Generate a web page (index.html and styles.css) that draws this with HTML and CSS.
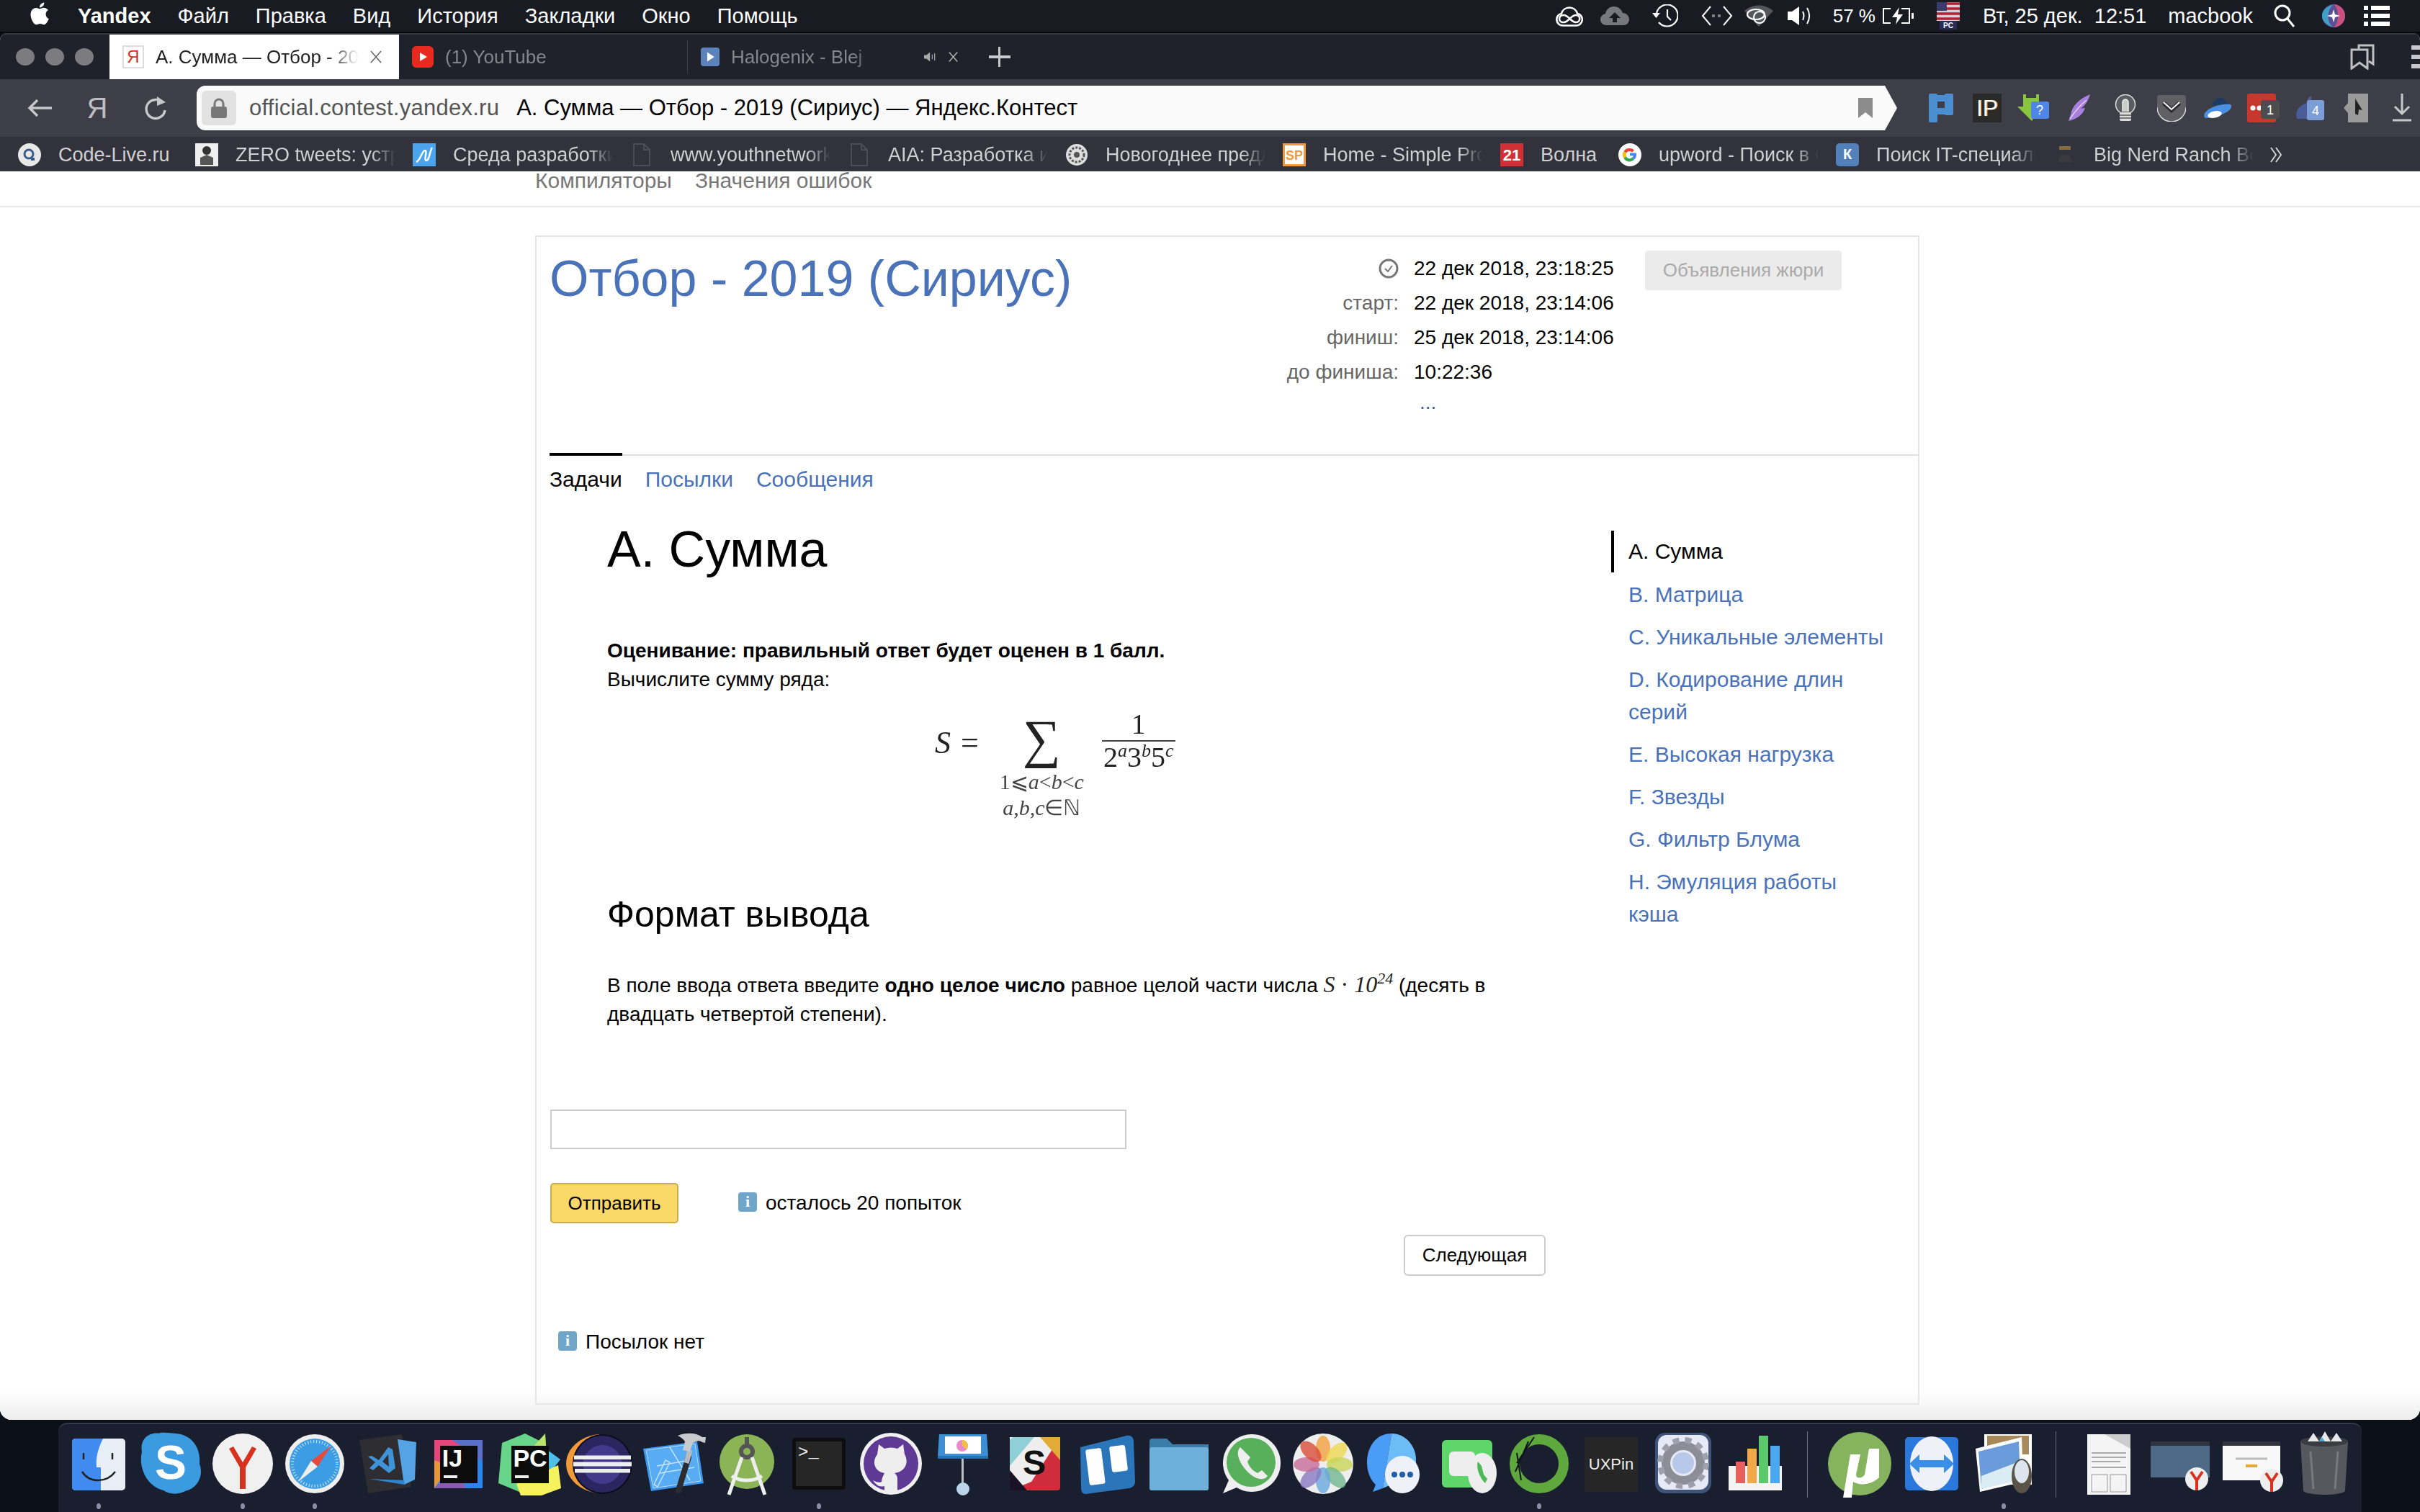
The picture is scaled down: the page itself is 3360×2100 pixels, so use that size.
FILE: index.html
```html
<!DOCTYPE html>
<html lang="ru">
<head>
<meta charset="UTF-8">
<title>А. Сумма — Отбор - 2019 (Сириус) — Яндекс.Контест</title>
<link rel="stylesheet" href="styles.css">
</head>
<body>
<div class="screen">

<!-- Системное меню -->
<div class="menubar">
  <svg class="apple" viewBox="0 0 24 24" width="36" height="36"><path fill="#fff" d="M17.05 12.54c-.03-2.6 2.13-3.85 2.22-3.91-1.21-1.77-3.1-2.01-3.77-2.04-1.6-.16-3.13.94-3.95.94-.81 0-2.07-.92-3.4-.89-1.75.03-3.37 1.02-4.27 2.58-1.82 3.16-.47 7.84 1.31 10.4.87 1.26 1.9 2.67 3.26 2.62 1.31-.05 1.8-.85 3.38-.85 1.58 0 2.02.85 3.4.82 1.4-.02 2.3-1.28 3.16-2.54.99-1.46 1.4-2.87 1.43-2.95-.03-.01-2.74-1.05-2.77-4.18zM14.45 4.89c.72-.87 1.21-2.09 1.07-3.3-1.04.04-2.3.69-3.05 1.56-.67.77-1.25 2.01-1.1 3.2 1.16.09 2.35-.59 3.08-1.46z"/></svg>
  <span class="app-name">Yandex</span>
  <span>Файл</span><span>Правка</span><span>Вид</span><span>История</span><span>Закладки</span><span>Окно</span><span>Помощь</span>
  <div class="status">
    <svg width="38" height="30" viewBox="0 0 38 30" fill="none" stroke="#fff" stroke-width="2.6"><path d="M10 28.500a8.500 8.500 0 0 1-2-16.800 11.500 11.500 0 0 1 22 0 8.500 8.500 0 0 1-1 16.800z"/><path d="M9 24c-6-2-5-10 2-10 7 0 10 10 17 10 7 0 7-10 0-10-7 0-10 10-17 10z"/></svg>
    <svg class="ml-24" width="40" height="28" viewBox="0 0 40 28"><path fill="#77787e" d="M8 27C3 27 0 23 0 19c0-4 3-7 7-8 1-6 6-10 12-10 6 0 10 4 12 9 5 0 9 4 9 9s-4 8-8 8z"/><path fill="#191b23" d="M20 9l8 8h-5v6h-6v-6h-5z"/></svg>
    <svg class="ml-32" width="36" height="32" viewBox="0 0 36 32" fill="none" stroke="#fff" stroke-width="2.200"><path d="M6 12A15 15 0 1 1 9 25"/><path d="M21 7v10l5 5"/><path fill="#fff" stroke="none" d="M0 12h11l-5.500 7z"/></svg>
    <svg class="ml-32" width="44" height="30" viewBox="0 0 44 30" fill="none" stroke="#fff" stroke-width="2"><path d="M13 2L2 15l11 13M31 2l11 13-11 13"/><path stroke="#7b7c82" stroke-width="4" stroke-dasharray="4 4" d="M15 15h14"/></svg>
    <svg class="ml-16" width="40" height="30" viewBox="0 0 40 30"><path fill="#55565c" d="M0 8C12-2 28-2 40 8L20 30z"/><ellipse cx="16" cy="13" rx="12" ry="7" fill="none" stroke="#fff" stroke-width="2.200"/><circle cx="21" cy="17" r="8" fill="none" stroke="#fff" stroke-width="2.200"/></svg>
    <svg class="ml-20" width="34" height="28" viewBox="0 0 34 28"><path fill="#fff" d="M0 8h6l10-7v26L6 20H0z"/><path d="M21 8c2 4 2 8 0 12M27 3c4 7 4 15 0 22" fill="none" stroke="#fff" stroke-width="2"/></svg>
    <span class="ml-29 pct">57 %</span>
    <svg class="ml-9" width="47" height="24" viewBox="0 0 47 24" fill="none" stroke="#fff" stroke-width="2"><path d="M12 2H2v20h10M27 2h11v20H27"/><path fill="#fff" stroke="none" d="M24 0L14 14h7l-2 10 10-14h-7zM41 8h3v8h-3z"/></svg>
    <svg class="ml-29" width="32" height="38" viewBox="0 0 32 38"><rect width="32" height="26" fill="#d0d0d8"/><path stroke="#b22234" stroke-width="3.400" d="M0 2h32M0 9h32M0 16h32M0 23h32"/><rect width="14" height="12" fill="#3c3b6e"/><rect x="4" y="26" width="24" height="12" fill="#2a2c58"/><text class="flag-text" x="16" y="36">PC</text></svg>
    <span class="ml-32">Вт, 25 дек.&nbsp; 12:51</span>
    <span class="ml-30">macbook</span>
    <svg class="ml-29" width="30" height="32" viewBox="0 0 30 32" fill="none" stroke="#fff" stroke-width="3"><circle cx="12" cy="12" r="10"/><path d="M19 20l9 11"/></svg>
    <svg class="ml-37" width="32" height="32" viewBox="0 0 32 32"><circle cx="16" cy="16" r="16" fill="#5a4f96"/><path fill="#c9507f" d="M16 0a16 16 0 0 1 0 32c8-6 8-26 0-32z"/><path fill="#3f9fc4" d="M16 32C6 26 6 8 16 0 4 4 0 10 0 16s4 12 16 16z"/><path fill="#fff" d="M16 7l2 7 7 2-7 2-2 7-2-7-7-2 7-2z"/></svg>
    <svg class="ml-26" width="36" height="30" viewBox="0 0 36 30" fill="#fff"><rect width="6" height="6" y="1"/><rect x="10" y="1" width="26" height="6"/><rect width="6" height="6" y="12"/><rect x="10" y="12" width="26" height="6"/><rect width="6" height="6" y="23"/><rect x="10" y="23" width="26" height="6"/></svg>
  </div>
</div>

<div class="browser">
  <!-- Вкладки -->
  <div class="tabstrip">
    <div class="lights"><i></i><i></i><i></i></div>
    <div class="tab tab-active">
      <span class="fav fav-ya">Я</span>
      <span class="tab-title">А. Сумма — Отбор - 2019 (Сириус)</span>
      <svg width="16" height="18" viewBox="0 0 16 18" stroke="#666" stroke-width="1.600"><path d="M1 1l14 16M15 1L1 17"/></svg>
    </div>
    <div class="tab tab-sep">
      <svg width="30" height="30" viewBox="0 0 30 30"><rect width="30" height="30" rx="6" fill="#e62b1e"/><path d="M11 9l10 6-10 6z" fill="#fff"/></svg>
      <span class="tab-title">(1) YouTube</span>
    </div>
    <div class="tab tab-sep">
      <svg width="32" height="32" viewBox="0 0 32 32"><rect width="32" height="32" rx="5" fill="#5b82bb"/><path d="M11 8l12 8-12 8z" fill="#fff"/></svg>
      <span class="tab-title tab-title-short">Halogenix - Blej</span>
      <svg class="tab-mute" width="22" height="16" viewBox="0 0 22 16" fill="#aaa"><path d="M0 5h4l6-5v16l-6-5H0z"/><path d="M14 4v8M18 2v12" stroke="#aaa" stroke-width="1.500"/></svg>
      <svg width="16" height="18" viewBox="0 0 16 18" stroke="#bbb" stroke-width="1.600"><path d="M1 1l14 16M15 1L1 17"/></svg>
    </div>
    <svg class="tab-plus" width="30" height="28" viewBox="0 0 30 28" fill="#c8c8cc"><rect y="12" width="30" height="4"/><rect x="13" width="3" height="28"/></svg>
    <div class="tabstrip-right">
      <svg width="36" height="36" viewBox="0 0 36 36" fill="none" stroke="#c0c0c4" stroke-width="3"><path d="M13 8V2h20v26l-6-4M3 8h22v26l-11-8-11 8z"/></svg>
      <svg class="tab-dots" width="22" height="36" viewBox="0 0 22 36" fill="#c8c8cc"><rect x="10" y="2" width="12" height="6"/><rect x="10" y="15" width="12" height="6"/><rect x="10" y="28" width="12" height="6"/></svg>
    </div>
  </div>

  <!-- Адресная строка -->
  <div class="toolbar">
    <div class="nav-btns">
      <svg width="34" height="26" viewBox="0 0 34 26" fill="none" stroke="#c8c8cc" stroke-width="3.400"><path d="M34 13H3M14 2L3 13l11 11"/></svg>
      <span class="ya-btn">Я</span>
      <svg width="34" height="36" viewBox="0 0 34 36" fill="none" stroke="#c8c8cc" stroke-width="3.400"><path d="M28 11a13 13 0 1 0 3 10"/><path fill="#c8c8cc" stroke="none" d="M20 2l12 8-12 5z"/></svg>
    </div>
    <div class="address">
      <div class="lock"><svg width="22" height="28" viewBox="0 0 22 28"><path d="M5 13V8a6 6 0 0 1 12 0v5" fill="none" stroke="#777" stroke-width="3"/><rect y="12" width="22" height="16" rx="3" fill="#777"/></svg></div>
      <span class="url-host">official.contest.yandex.ru</span>
      <span class="url-title">А. Сумма — Отбор - 2019 (Сириус) — Яндекс.Контест</span>
      <svg class="url-flag" width="20" height="28" viewBox="0 0 20 28"><path fill="#8c8c8c" d="M0 0h20v28l-10-8-10 8z"/></svg>
    </div>
    <div class="extensions">
      <span><svg width="34" height="40" viewBox="0 0 34 40" fill="#4a8ed0"><rect width="12" height="40" rx="2"/><rect x="22" width="12" height="30" rx="2"/><rect y="2" width="34" height="9" rx="2"/><rect y="20" width="34" height="9" rx="2"/></svg></span>
      <span><svg width="40" height="40" viewBox="0 0 40 40"><rect width="40" height="40" fill="#2a2a28"/><text class="ext-ip-o" x="21" y="31">IP</text><text class="ext-ip" x="20" y="31">IP</text></svg></span>
      <span><svg width="44" height="38" viewBox="0 0 44 38"><path fill="#8ac53e" d="M8 0h4v5h14V0h4v11h6L20 37 0 17h8z"/><rect x="19" y="10" width="25" height="24" rx="3" fill="#4f86e8"/><text class="ext-q" x="31" y="28">?</text></svg></span>
      <span><svg width="32" height="38" viewBox="0 0 32 38"><path fill="#a87fdc" d="M31 0C16 6 6 16 4 28L1 37c10-2 20-8 23-18-2 0-4 0-6 1 6-4 11-12 13-20z"/><path d="M3 34C10 24 18 14 26 8" stroke="#e4d4f8" stroke-width="1.500" fill="none"/></svg></span>
      <span><svg width="30" height="38" viewBox="0 0 30 38"><circle cx="15" cy="14" r="13.500" fill="#5c5d62" stroke="#ddd" stroke-width="1.500"/><path d="M11 24V11a4 4 0 0 1 8 0v13" fill="#ccc" stroke="#eee" stroke-width="1.500"/><rect x="7" y="25" width="16" height="12" rx="2" fill="#ddd"/><path d="M7 29h16M7 33h16" stroke="#555" stroke-width="1.500"/></svg></span>
      <span><svg width="40" height="37" viewBox="0 0 40 37"><path fill="#606064" d="M0 3a3 3 0 0 1 3-3h34a3 3 0 0 1 3 3v14a20 20 0 0 1-40 0z"/><path d="M0 17a20 20 0 0 0 40 0" fill="none" stroke="#ddd" stroke-width="1.500"/><path d="M9 11l11 10 11-10" fill="none" stroke="#2c2c30" stroke-width="6"/><path d="M9 10l11 10 11-10" fill="none" stroke="#fff" stroke-width="2"/></svg></span>
      <span><svg width="40" height="28" viewBox="0 0 40 28"><path fill="#1c3a62" d="M12 10C14 3 20 0 24 0s8 3 10 9z"/><path fill="#4a90e2" d="M2 27C-3 20 16 7 38 9c2 2 2 6-6 11-10 6-26 10-30 7z"/><ellipse cx="16" cy="23" rx="10" ry="4.500" fill="#fff" transform="rotate(-12 16 23)"/></svg></span>
      <span><svg width="46" height="40" viewBox="0 0 46 40"><rect width="40" height="40" rx="3" fill="#c6372e"/><circle cx="8" cy="20" r="3.500" fill="#fff"/><circle cx="17" cy="20" r="3.500" fill="#fff"/><rect x="19" y="9" width="26" height="26" rx="4" fill="#4d4d50"/><text class="ext-n" x="32" y="29">1</text></svg></span>
      <span><svg width="40" height="34" viewBox="0 0 40 34"><path fill="#4a5c98" d="M2 32C-2 20 8 12 16 10c0-4 2-8 6-10v32z"/><rect x="16" y="6" width="24" height="28" rx="3" fill="#7c9ed8"/><text class="ext-n" x="28" y="27">4</text></svg></span>
      <span><svg width="34" height="40" viewBox="0 0 34 40"><path fill="#9a9a9a" d="M6 0h28v40H6zM0 20l6-7v14z"/><path fill="#222" d="M16 7l10 16-5-1-1 8-4-2z"/></svg></span>
      <span><svg width="26" height="40" viewBox="0 0 26 40" fill="none" stroke="#c8c8cc" stroke-width="3"><path d="M13 0v28M3 18l10 10 10-10M0 37h26"/></svg></span>
    </div>
  </div>

  <!-- Закладки -->
  <div class="bookmarks">
    <div class="bm bm-first"><svg width="32" height="32" viewBox="0 0 32 32"><circle cx="16" cy="16" r="16" fill="#e8e8e8"/><circle cx="15" cy="15" r="6" fill="none" stroke="#3a5a8c" stroke-width="3"/><rect x="18" y="20" width="5" height="4" fill="#3a5a8c"/></svg><span>Code-Live.ru</span></div>
    <div class="bm"><svg width="32" height="32" viewBox="0 0 32 32"><rect width="32" height="32" fill="#eee"/><circle cx="16" cy="10" r="6" fill="#333"/><path d="M7 30V20l9-4 9 4v10z" fill="#555"/></svg><span>ZERO tweets: устройство</span></div>
    <div class="bm"><svg width="32" height="32" viewBox="0 0 32 32"><rect width="32" height="32" fill="#4aa4ee"/><path d="M5 26c6-2 8-16 12-16s-2 14 2 14 5-14 8-18" fill="none" stroke="#fff" stroke-width="2.500"/></svg><span>Среда разработки</span></div>
    <div class="bm"><svg width="32" height="32" viewBox="0 0 24 32" fill="none" stroke="#4c4d55" stroke-width="2"><path d="M1 1h14l8 8v22H1zM15 1v8h8"/></svg><span>www.youthnetwork.org</span></div>
    <div class="bm"><svg width="32" height="32" viewBox="0 0 24 32" fill="none" stroke="#4c4d55" stroke-width="2"><path d="M1 1h14l8 8v22H1zM15 1v8h8"/></svg><span>AIA: Разработка игр</span></div>
    <div class="bm"><svg width="32" height="32" viewBox="0 0 32 32"><circle cx="16" cy="16" r="15" fill="#ddd"/><circle cx="16" cy="16" r="10" fill="none" stroke="#555" stroke-width="3" stroke-dasharray="3 2"/><circle cx="16" cy="16" r="4" fill="#555"/></svg><span>Новогоднее предложение</span></div>
    <div class="bm"><svg width="32" height="32" viewBox="0 0 32 32"><rect width="32" height="32" fill="#f09a3e"/><rect x="3" y="3" width="26" height="26" fill="#fff"/><text class="bm-sp" x="16" y="23">SP</text></svg><span>Home - Simple Programmer</span></div>
    <div class="bm bm-short"><svg width="32" height="32" viewBox="0 0 32 32"><rect width="32" height="32" fill="#cf2f35"/><text class="bm-21" x="16" y="24">21</text></svg><span>Волна</span></div>
    <div class="bm"><svg width="32" height="32" viewBox="0 0 32 32"><circle cx="16" cy="16" r="16" fill="#fff"/><path d="M16 7a9 9 0 0 1 6 2.400l-3 3a5 5 0 0 0-8 1.200L7.500 11A9 9 0 0 1 16 7z" fill="#ea4335"/><path d="M7.500 11l3.500 2.800a5 5 0 0 0 0 4.400L7.500 21a9 9 0 0 1 0-10z" fill="#fbbc05"/><path d="M7.500 21l3.500-2.800a5 5 0 0 0 8 1.600l3 2.600A9 9 0 0 1 7.500 21z" fill="#34a853"/><path d="M25 16c0 3-1 5-3 6.400l-3-2.600c1-.7 1.500-1.500 1.800-2.600H16v-3.700h8.800c.1.800.2 1.600.2 2.500z" fill="#4285f4"/></svg><span>upword - Поиск в Google</span></div>
    <div class="bm"><svg width="32" height="32" viewBox="0 0 32 32"><rect width="32" height="32" rx="5" fill="#5181b8"/><text class="bm-vk" x="16" y="22">К</text></svg><span>Поиск IT-специалистов</span></div>
    <div class="bm"><svg width="32" height="32" viewBox="0 0 32 32"><rect x="8" y="4" width="16" height="5" fill="#8a6c3a"/><path d="M6 26l4-10h12l4 10z" fill="#3a3a40"/></svg><span>Big Nerd Ranch Books</span></div>
    <svg class="bm-more" width="18" height="22" viewBox="0 0 18 22" fill="none" stroke="#d0d0d4" stroke-width="2"><path d="M2 1l7 10-7 10M9 1l7 10-7 10"/></svg>
  </div>

  <!-- Страница -->
  <div class="page">
    <div class="subnav"><a>Компиляторы</a><a>Значения ошибок</a></div>
    <div class="card">
      <div class="head">
        <h1 class="contest-title">Отбор - 2019 (Сириус)</h1>
        <div class="times">
          <span class="t-label"><svg width="28" height="28" viewBox="0 0 28 28" fill="none" stroke="#777" stroke-width="3"><circle cx="14" cy="14" r="12"/><path stroke-width="2" d="M9 14l4 4 6-8"/></svg></span><span>22 дек 2018, 23:18:25</span>
          <span class="t-label">старт:</span><span>22 дек 2018, 23:14:06</span>
          <span class="t-label">финиш:</span><span>25 дек 2018, 23:14:06</span>
          <span class="t-label">до финиша:</span><span>10:22:36</span>
          <span></span><span class="t-more">...</span>
        </div>
        <button class="jury-btn">Объявления жюри</button>
      </div>
      <div class="tabs">
        <a class="tabs-item tabs-item-active">Задачи</a>
        <a class="tabs-item">Посылки</a>
        <a class="tabs-item">Сообщения</a>
      </div>
      <div class="problem-wrap">
        <div class="problem">
          <div class="statement">
            <h1 class="problem-title">A. Сумма</h1>
            <p class="legend"><b>Оценивание: правильный ответ будет оценен в 1 балл.</b><br>Вычислите сумму ряда:</p>
            <div class="formula">
              <span class="f-s">S</span><span class="f-eq">=</span>
              <div class="f-sum">
                <span class="f-sigma">∑</span>
                <span class="f-sub">1⩽<i>a</i>&lt;<i>b</i>&lt;<i>c</i></span>
                <span class="f-sub"><i>a</i>,<i>b</i>,<i>c</i>∈ℕ</span>
              </div>
              <div class="f-frac">
                <span class="f-num">1</span>
                <span class="f-den">2<sup><i>a</i></sup>3<sup><i>b</i></sup>5<sup><i>c</i></sup></span>
              </div>
            </div>
            <h2 class="output-title">Формат вывода</h2>
            <p class="output-text">В поле ввода ответа введите <b>одно целое число</b> равное целой части числа <span class="math"><i>S</i> · <i>10<sup>24</sup></i></span> (десять в двадцать четвертой степени).</p>
          </div>
          <input class="answer" type="text">
          <div class="submit-row">
            <button class="send-btn">Отправить</button>
            <span class="info-icon">i</span><span class="attempts">осталось 20 попыток</span>
          </div>
          <div class="next-row"><button class="next-btn">Следующая</button></div>
          <div class="no-subs"><span class="info-icon">i</span><span>Посылок нет</span></div>
        </div>
        <div class="side">
          <a class="side-item side-item-active">A. Сумма</a>
          <a class="side-item">B. Матрица</a>
          <a class="side-item">C. Уникальные элементы</a>
          <a class="side-item">D. Кодирование длин серий</a>
          <a class="side-item">E. Высокая нагрузка</a>
          <a class="side-item">F. Звезды</a>
          <a class="side-item">G. Фильтр Блума</a>
          <a class="side-item">H. Эмуляция работы кэша</a>
        </div>
      </div>
    </div>
  </div>
</div>

<!-- Dock -->
<div class="dock">
  <div class="di dot"><svg viewBox="0 0 90 90"><rect x="8" y="10" width="74" height="72" rx="5" fill="#e8eef6"/><path d="M13 10h38c-8 16-10 28-9 40h6v32H13a5 5 0 0 1-5-5V15a5 5 0 0 1 5-5z" fill="#3f8bf0"/><path d="M24 30v9M64 30v9" stroke="#222" stroke-width="2.500"/><path d="M22 56c10 16 34 16 46 0" fill="none" stroke="#222" stroke-width="2.500"/></svg></div>
  <div class="di"><svg viewBox="0 0 90 90"><path d="M30 3C14 0 2 12 5 28c-5 22 6 48 30 54 8 6 22 6 30 1 18-4 26-22 20-38 2-24-12-40-32-42C24 0 30 3 30 3z" fill="#3c9ae0"/><text class="d-skype" x="45" y="66">S</text></svg></div>
  <div class="di dot"><svg viewBox="0 0 90 90"><circle cx="45" cy="45" r="42" fill="#f0f0f0"/><path d="M26 24l6-3 13 22 13-22 6 3-15 26v30h-8V50z" fill="#d8321f"/></svg></div>
  <div class="di dot"><svg viewBox="0 0 90 90"><circle cx="45" cy="45" r="41" fill="#eee"/><circle cx="45" cy="45" r="35" fill="#3c9ce4"/><circle cx="45" cy="45" r="31" fill="none" stroke="#d8ecf8" stroke-width="4" stroke-dasharray="1 3"/><path d="M68 20L40 41l9 8z" fill="#e64a3c"/><path d="M22 70l18-29 9 8z" fill="#eee"/></svg></div>
  <!-- VS Code -->
  <div class="di"><svg viewBox="0 0 90 90"><path d="M7 12L66 4l13 73-60 9z" fill="#2e2e32"/><path d="M60 11l26 4-2 52-15 7z" fill="#55a2e4"/><path d="M20 66l49 8 15-7-15 7z" fill="#1f73bd"/><path d="M20 66l49 2 1 6z" fill="#2f86cf"/><path d="M47 22l6 3 4 26-9 7-14-11-8 7-5-3 8-8-10-8 5-1 10 6z" fill="#3f93d8"/><path d="M47 32l-8 10 9 7z" fill="#2e2e32"/></svg></div>
  <!-- IntelliJ -->
  <div class="di"><svg viewBox="0 0 90 90"><rect x="11" y="12" width="67" height="67" fill="#2c85e8"/><path d="M11 12h47L11 50z" fill="#e8457c"/><path d="M36 12h42v30z" fill="#5a6fc8"/><path d="M11 40l22 8L11 79z" fill="#e8963a"/><path d="M11 79l30-30 14 30z" fill="#8a5cb0"/><rect x="19" y="20" width="52" height="52" fill="#0c0c0c"/><text class="d-ij" x="36" y="49">IJ</text><rect x="24" y="61" width="19" height="4" fill="#eee"/></svg></div>
  <!-- PyCharm -->
  <div class="di"><svg viewBox="0 0 90 90"><path d="M5 16L37 3l28 14-24 72L0 72z" fill="#68d48a"/><path d="M65 3l3 44-34-10z" fill="#b8e46a"/><path d="M60 20l26 19-14 18z" fill="#4cc0e8"/><path d="M25 73l58-26 4 32-27 10-29 0z" fill="#f6f25e"/><rect x="18" y="20" width="52" height="52" fill="#0c0c0c"/><text class="d-ij" x="44" y="49">PC</text><rect x="23" y="61" width="19" height="4" fill="#eee"/></svg></div>
  <!-- Eclipse -->
  <div class="di"><svg viewBox="0 0 90 90"><path d="M40 4C14 6-6 24-6 45s20 39 46 41z" fill="#f09a38"/><circle cx="44.500" cy="45.500" r="41.500" fill="#0c0c1e"/><circle cx="44.500" cy="45.500" r="39.500" fill="#2b2560"/><circle cx="44.500" cy="46" r="27" fill="#443a8c"/><rect x="5" y="33.500" width="79" height="5.500" fill="#eee"/><rect x="4" y="42.500" width="81" height="6" fill="#eee"/><rect x="6" y="52" width="77" height="5.500" fill="#eee"/></svg></div>
  <!-- Xcode -->
  <div class="di"><svg viewBox="0 0 90 90"><path d="M1 24l75-10 9 58-73 11z" fill="#3d98f0"/><path d="M5 26l68-9 8 52-66 10z" fill="#58acf4" stroke="#b8dcfa" stroke-width="1"/><path d="M16 74l16-34 6 3-17 34zM24 58l48-8M20 48l46-8M38 22l28 46" fill="none" stroke="#c4e2fb" stroke-width="1.500"/><path d="M50 82l14-46" stroke="#2c2c30" stroke-width="8" stroke-linecap="round"/><path d="M61 44l5-18" stroke="#b8bac0" stroke-width="7"/><path d="M49 6c12-5 26-4 34 2l5 0-1 8-4-1c-4-3-8-2-13 1l-4 12-10-2 3-12c-3-4-6-6-10-8z" fill="#c8cace"/></svg></div>
  <div class="di"><svg viewBox="0 0 90 90"><circle cx="45" cy="42" r="38" fill="#8ab456"/><circle cx="45" cy="28" r="8" fill="none" stroke="#555" stroke-width="6"/><rect x="42" y="8" width="6" height="10" fill="#555"/><path d="M38 36L20 88M52 36l18 52" stroke="#eee" stroke-width="5"/><path d="M24 62c12 8 30 8 42 0" fill="none" stroke="#eee" stroke-width="5"/></svg></div>
  <div class="di dot"><svg viewBox="0 0 90 90"><rect x="8" y="9" width="74" height="72" rx="4" fill="#0e0e0e"/><rect x="13" y="14" width="64" height="62" fill="#262626"/><text class="d-term" x="16" y="36">&gt;_</text></svg></div>
  <div class="di"><svg viewBox="0 0 90 90"><circle cx="45" cy="45" r="43" fill="#f0f0f0"/><circle cx="45" cy="45" r="38" fill="#5f3a94"/><path d="M28 18l8 6c6-2 12-2 18 0l8-6 2 14c6 10 2 24-14 26 3 2 4 5 4 8v20a38 38 0 0 1-18 0V76c-8 2-12-2-16-8 4 2 8 4 12 2 0-4 2-8 4-12C22 56 18 42 26 32z" fill="#eee"/></svg></div>
  <div class="di"><svg viewBox="0 0 90 90"><path d="M12 4h66l2 30H10z" fill="#3c8fd4"/><rect x="10" y="34" width="70" height="4" fill="#2a70b0"/><rect x="20" y="7" width="50" height="24" fill="#fff"/><circle cx="44" cy="20" r="8" fill="#e88acc"/><path d="M44 20v-8a8 8 0 0 1 6 13z" fill="#f0c040"/><rect x="43" y="38" width="3" height="40" fill="#b8c0c8"/><circle cx="45" cy="80" r="9" fill="#bcd4e8"/></svg></div>
  <div class="di"><svg viewBox="0 0 90 90"><rect x="10" y="8" width="70" height="74" rx="4" fill="#cf2c3c"/><path d="M10 8h70L40 70 10 82z" fill="#eee"/><path d="M14 8h30L10 48V12z" fill="#8fd0d8"/><path d="M52 8h28v32z" fill="#e4aa38"/><path d="M10 54l24 28H10z" fill="#1a1226"/><text class="d-slack" x="44" y="60">S</text></svg></div>
  <div class="di"><svg viewBox="0 0 90 90"><path d="M8 22L72 6c6-1 10 2 10 8l2 56c0 4-3 8-8 9l-60 8c-4 0-7-2-7-8z" fill="#2b76ba"/><rect x="18" y="24" width="22" height="50" rx="3" fill="#fff" transform="rotate(-7 29 50)"/><rect x="50" y="20" width="22" height="36" rx="3" fill="#fff" transform="rotate(-7 60 38)"/></svg></div>
  <div class="di"><svg viewBox="0 0 90 90"><path d="M4 20V14a4 4 0 0 1 4-4h20l8 8h50v62H4z" fill="#3a7ea8"/><rect x="4" y="22" width="82" height="60" rx="3" fill="#6db0da"/></svg></div>
  <div class="di"><svg viewBox="0 0 90 90"><path d="M45 4a40 40 0 1 1-20 74L6 86l8-18A40 40 0 0 1 45 4z" fill="#eee"/><circle cx="45" cy="43" r="34" fill="#58b05c"/><path d="M30 22c-8 8 0 24 10 34s22 14 28 6l-8-8-6 4c-8-4-12-10-14-16l4-6z" fill="#eee"/></svg></div>
  <div class="di"><svg viewBox="0 0 90 90"><circle cx="45" cy="45" r="42" fill="#eee"/><g fill-opacity=".8"><ellipse cx="45" cy="24" rx="10" ry="18" fill="#f2a040"/><ellipse cx="64" cy="30" rx="10" ry="18" fill="#eed850" transform="rotate(45 64 30)"/><ellipse cx="68" cy="46" rx="18" ry="10" fill="#c8d458"/><ellipse cx="62" cy="64" rx="10" ry="18" fill="#70b890" transform="rotate(-45 62 64)"/><ellipse cx="45" cy="68" rx="10" ry="18" fill="#68a8dc"/><ellipse cx="28" cy="64" rx="10" ry="18" fill="#8a78c0" transform="rotate(45 28 64)"/><ellipse cx="22" cy="46" rx="18" ry="10" fill="#c86c98"/><ellipse cx="28" cy="28" rx="10" ry="18" fill="#d84c38" transform="rotate(-45 28 28)"/></g></svg></div>
  <div class="di"><svg viewBox="0 0 90 90"><path d="M40 3C18 3 6 22 6 44c0 12 5 24 12 30l-4 10 14-5z" fill="#4a9cf4"/><path d="M40 3c20 0 34 18 34 36v20L28 79z" fill="#6cbcf8"/><ellipse cx="55" cy="60" rx="24" ry="26" fill="#eef2f8"/><circle cx="44" cy="60" r="4" fill="#1f5ea8"/><circle cx="55" cy="60" r="4" fill="#1f5ea8"/><circle cx="66" cy="60" r="4" fill="#1f5ea8"/></svg></div>
  <div class="di"><svg viewBox="0 0 90 90"><rect x="10" y="12" width="70" height="66" rx="6" fill="#5ed66a"/><rect x="20" y="28" width="36" height="34" rx="6" fill="#eee"/><ellipse cx="66" cy="58" rx="20" ry="28" fill="#eee"/><path d="M60 42c-3 8 2 22 10 30l3-6-5-6-3-12z" fill="#4cb858"/></svg></div>
  <div class="di dot"><svg viewBox="0 0 90 90"><circle cx="45" cy="45" r="34" fill="none" stroke="#5ea83e" stroke-width="14"/><path d="M14 44L38 8M12 56L30 14M20 68L14 30" stroke="#10141f" stroke-width="2"/></svg></div>
  <div class="di"><svg viewBox="0 0 90 90"><rect x="8" y="8" width="74" height="76" fill="#262626"/><text class="d-ux" x="45" y="53">UXPin</text></svg></div>
  <div class="di"><svg viewBox="0 0 90 90"><rect x="6" y="2" width="78" height="84" rx="14" fill="#3f5478"/><rect x="10" y="5" width="70" height="76" rx="12" fill="#e6eaf6"/><circle cx="45" cy="44" r="24" fill="none" stroke="#8d8d98" stroke-width="12"/><circle cx="45" cy="44" r="32" fill="none" stroke="#a0a0ac" stroke-width="8" stroke-dasharray="9 8"/><circle cx="45" cy="44" r="15" fill="#b8c8e8"/></svg></div>
  <div class="di"><svg viewBox="0 0 90 90"><rect x="8" y="48" width="74" height="34" fill="#f4f4f4"/><rect x="18" y="42" width="13" height="30" fill="#e8605c"/><rect x="34" y="24" width="13" height="48" fill="#f0a848"/><rect x="50" y="6" width="13" height="66" fill="#5cc86c"/><rect x="66" y="20" width="13" height="52" fill="#4aa8f0"/></svg></div>
  <div class="dock-sep"></div>
  <div class="di"><svg viewBox="0 0 90 90"><circle cx="45" cy="45" r="44" fill="#86b45e"/><path d="M22 92l10-60h14l-6 28c0 6 8 6 12 0l6-36h14v40c-10 10-26 12-36 6l-2 22z" fill="#fff"/></svg></div>
  <div class="di"><svg viewBox="0 0 90 90"><rect x="8" y="8" width="74" height="74" rx="5" fill="#2b78dc"/><ellipse cx="45" cy="45" rx="30" ry="38" fill="#eef2f8"/><path d="M14 45l14-13v8h34v-8l14 13-14 13v-8H28v8z" fill="#3a8ee4"/></svg></div>
  <div class="di dot"><svg viewBox="0 0 90 90"><rect x="18" y="4" width="66" height="70" fill="#fff"/><rect x="22" y="6" width="58" height="26" fill="#a8895a"/><path d="M6 24L70 8l2 62L12 84z" fill="#fff"/><path d="M10 28l56-14 2 52-54 14z" fill="#6a9cdc"/><path d="M14 62l52-20 2 26-54 12z" fill="#dcecf4"/><ellipse cx="70" cy="62" rx="14" ry="24" fill="#5a5448"/><ellipse cx="70" cy="56" rx="10" ry="16" fill="#dde4ee"/></svg></div>
  <div class="dock-sep"></div>
  <div class="di"><svg viewBox="0 0 90 90"><rect x="16" y="4" width="60" height="84" fill="#f4f4f4"/><path d="M22 30h48M22 36h48M22 42h40M22 50h48" stroke="#aaa" stroke-width="2"/><rect x="22" y="60" width="22" height="24" fill="none" stroke="#999"/><rect x="48" y="60" width="22" height="24" fill="none" stroke="#999"/><path d="M40 4h36v20z" fill="#ccc"/></svg></div>
  <div class="di"><svg viewBox="0 0 90 90"><rect x="4" y="14" width="82" height="6" fill="#30343c"/><rect x="4" y="20" width="82" height="44" fill="#4e6a86"/><circle cx="68" cy="66" r="16" fill="#eee"/><path d="M60 56l8 12 8-12M68 68v14" fill="none" stroke="#d8321f" stroke-width="4"/></svg></div>
  <div class="di"><svg viewBox="0 0 90 90"><rect x="4" y="14" width="80" height="6" fill="#30343c"/><rect x="4" y="20" width="80" height="48" fill="#f8f8f8"/><rect x="36" y="46" width="16" height="4" fill="#e4a838"/><path d="M22 38h44" stroke="#bbb" stroke-width="3"/><circle cx="72" cy="68" r="16" fill="#eee"/><path d="M64 58l8 12 8-12M72 70v14" fill="none" stroke="#d8321f" stroke-width="4"/></svg></div>
  <div class="di"><svg viewBox="0 0 90 90"><path d="M12 14h66l-4 68c0 4-16 6-28 6s-30-2-30-6z" fill="#55585f"/><path d="M26 28l4 52M64 28l-4 52" stroke="#77797f" stroke-width="3"/><ellipse cx="45" cy="14" rx="33" ry="7" fill="#3a3c42"/><path d="M22 14l8-12 8 12 8-14 8 14 8-12 8 12z" fill="#e8e8ea"/><path d="M38 14l4-6 4 6z" fill="#4aa8d8"/></svg></div>
</div>

</div>
</body>
</html>
```

FILE: styles.css
```css
* {
    box-sizing: border-box;
}

html, body {
    margin: 0;
    padding: 0;
}

body {
    font-family: "Liberation Sans", Arial, sans-serif;
    background: #0b0f18;
}

.screen {
    width: 3360px;
    height: 2100px;
    overflow: hidden;
    display: flex;
    flex-direction: column;
}

/* Системное меню */
.menubar {
    height: 46px;
    flex: none;
    display: flex;
    align-items: center;
    gap: 37px;
    padding-left: 38px;
    background: #191b23;
    border-bottom: 2px solid #07080c;
    color: #fff;
    font-size: 29px;
}

.apple {
    margin-right: -3px;
    margin-bottom: 6px;
}

.app-name {
    font-weight: bold;
}

.status {
    margin-left: auto;
    padding-right: 42px;
    display: flex;
    align-items: center;
}

.pct {
    font-size: 26px;
}

.ml-9 { margin-left: 9px; }
.ml-16 { margin-left: 16px; }
.ml-20 { margin-left: 20px; }
.ml-24 { margin-left: 24px; }
.ml-26 { margin-left: 26px; }
.ml-29 { margin-left: 29px; }
.ml-30 { margin-left: 30px; }
.ml-32 { margin-left: 32px; }
.ml-37 { margin-left: 37px; }

.flag-text {
    fill: #fff;
    font-size: 10px;
    font-weight: bold;
    text-anchor: middle;
}

/* Браузер */
.browser {
    flex: 1;
    min-height: 0;
    display: flex;
    flex-direction: column;
    border-radius: 10px 10px 16px 16px;
    overflow: hidden;
    background: #fff;
}

.tabstrip {
    height: 64px;
    flex: none;
    display: flex;
    align-items: center;
    background: #20222b;
    border-top: 2px solid #353741;
}

.lights {
    width: 152px;
    display: flex;
    gap: 15px;
    padding-left: 22px;
}

.lights i {
    width: 26px;
    height: 24px;
    border-radius: 50%;
    background: #7b7b80;
}

.tab {
    width: 400px;
    height: 62px;
    display: flex;
    align-items: center;
    padding-left: 18px;
    gap: 16px;
    font-size: 26px;
    color: #85868c;
}

.tab-active {
    width: 402px;
    background: #fff;
    color: #222;
}

.tab-sep + .tab-sep {
    border-left: 1px solid #3d3f48;
    height: 46px;
}

.tab-title {
    flex: 1;
    min-width: 0;
    white-space: nowrap;
    overflow: hidden;
    -webkit-mask-image: linear-gradient(to right, #000 85%, transparent);
    mask-image: linear-gradient(to right, #000 85%, transparent);
}

.tab-active svg {
    margin-right: 24px;
}

.tab-title-short {
    flex: none;
    width: 200px;
}

.tab-mute {
    margin-left: 52px;
}

.tab-sep svg:last-child {
    margin-right: 24px;
}

.fav {
    flex: none;
    width: 30px;
    height: 32px;
    display: flex;
    align-items: center;
    justify-content: center;
    border: 2px solid #ddd;
    background: #fff;
    color: #d8321f;
    font-size: 24px;
}

.tab-plus {
    margin-left: 19px;
}

.tabstrip-right {
    margin-left: auto;
    display: flex;
    align-items: center;
    gap: 40px;
}

.toolbar {
    height: 80px;
    flex: none;
    display: flex;
    align-items: center;
    background: #3d3e47;
}

.nav-btns {
    width: 273px;
    flex: none;
    display: flex;
    align-items: center;
    gap: 46px;
    padding-left: 38px;
}

.ya-btn {
    width: 34px;
    color: #bdbdc2;
    font-size: 40px;
    text-align: center;
}

.address {
    width: 2361px;
    height: 62px;
    flex: none;
    display: flex;
    align-items: center;
    background: #fafafa;
    border-radius: 12px 0 0 12px;
    clip-path: polygon(0 0, 2344px 0, 100% 50%, 2344px 100%, 0 100%);
    padding-left: 7px;
    font-size: 31px;
    white-space: nowrap;
}

.lock {
    width: 48px;
    height: 48px;
    flex: none;
    display: flex;
    align-items: center;
    justify-content: center;
    background: #e2e2e2;
    border-radius: 6px;
}

.url-host {
    margin-left: 18px;
    color: #555;
    letter-spacing: 0.25px;
}

.url-title {
    margin-left: 24px;
    color: #000;
}

.url-flag {
    margin-left: auto;
    margin-right: 34px;
}

.extensions {
    display: flex;
    align-items: center;
    margin-left: 29px;
}

.extensions span {
    width: 64px;
    display: flex;
    justify-content: center;
}

.ext-ip, .ext-ip-o {
    fill: #fff;
    font-size: 32px;
    text-anchor: middle;
}

.ext-ip-o {
    fill: #e09030;
}

.ext-q, .ext-n {
    fill: #fff;
    font-size: 18px;
    text-anchor: middle;
}

.bookmarks {
    height: 48px;
    flex: none;
    display: flex;
    align-items: center;
    padding-left: 25px;
    padding-top: 2px;
    background: #31323b;
    font-size: 27px;
    color: #d0d0d4;
}

.bm {
    width: 302px;
    flex: none;
    display: flex;
    align-items: center;
    gap: 24px;
}

.bm svg {
    flex: none;
}

.bm span {
    width: 222px;
    white-space: nowrap;
    overflow: hidden;
    -webkit-mask-image: linear-gradient(to right, #000 85%, transparent);
    mask-image: linear-gradient(to right, #000 85%, transparent);
}

.bm-first {
    width: 246px;
}

.bm-first span, .bm-short span {
    width: auto;
    -webkit-mask-image: none;
    mask-image: none;
}

.bm-short {
    width: 164px;
}

.bm-sp {
    fill: #f09a3e;
    font-size: 18px;
    font-weight: bold;
    text-anchor: middle;
}

.bm-21 {
    fill: #fff;
    font-size: 22px;
    font-weight: bold;
    text-anchor: middle;
}

.bm-vk {
    fill: #fff;
    font-size: 20px;
    font-weight: bold;
    text-anchor: middle;
}

.bm-more {
    margin-left: -2px;
}

/* Страница */
.page {
    flex: 1;
    min-height: 0;
    position: relative;
    overflow: hidden;
    padding-left: 743px;
    background: #fff;
}

.page::after {
    content: "";
    position: absolute;
    left: 0;
    right: 0;
    bottom: 0;
    height: 40px;
    background: linear-gradient(to bottom, rgba(235, 235, 235, 0), rgba(235, 235, 235, 0.9));
}

.subnav {
    margin-left: -743px;
    padding-left: 743px;
    height: 50px;
    display: flex;
    gap: 32px;
    align-items: flex-end;
    padding-bottom: 18px;
    border-bottom: 2px solid #e8e8e8;
    font-size: 30px;
    color: #777;
    line-height: 34px;
}

.card {
    width: 1922px;
    height: 1624px;
    margin-top: 39px;
    border: 2px solid #e5e5e5;
}

.head {
    height: 302px;
    display: flex;
    align-items: flex-start;
    padding: 20px 106px 0 18px;
}

.contest-title {
    flex: 1;
    margin: -2px 0 0;
    font-size: 70px;
    font-weight: normal;
    line-height: 80px;
    color: #4a72b8;
}

.times {
    display: grid;
    grid-template-columns: 220px 278px;
    column-gap: 21px;
    font-size: 28px;
    line-height: 48px;
    color: #000;
}

.t-label {
    color: #666;
    text-align: right;
    display: flex;
    justify-content: flex-end;
    align-items: center;
}

.t-more {
    padding-left: 8px;
    color: #3a62b0;
    line-height: 36px;
}

.jury-btn {
    width: 273px;
    height: 55px;
    margin-left: 43px;
    margin-top: -1px;
    padding: 0;
    border: 0;
    border-radius: 4px;
    background: #ebebeb;
    color: #aaa;
    font-family: inherit;
    font-size: 26px;
}

.tabs {
    margin-left: 18px;
    height: 66px;
    display: flex;
    gap: 32px;
    border-top: 2px solid #ddd;
    font-size: 30px;
    color: #4a72b8;
}

.tabs-item {
    line-height: 66px;
    margin-top: -4px;
    border-top: 4px solid transparent;
}

.tabs-item-active {
    border-top-color: #000;
    color: #000;
}

.problem-wrap {
    display: flex;
    padding-left: 19px;
}

.problem {
    width: 1382px;
    flex: none;
}

.statement {
    padding-left: 79px;
    width: 1320px;
}

.problem-title {
    margin: 26px 0 0;
    font-size: 70px;
    font-weight: normal;
    line-height: 80px;
    color: #000;
}

.legend {
    margin: 81px 0 0;
    font-size: 28px;
    line-height: 40px;
}

.formula {
    display: flex;
    align-items: flex-start;
    margin-left: 455px;
    margin-top: 20px;
    height: 170px;
    font-family: "Liberation Serif", serif;
    color: #222;
    filter: blur(0.5px);
}

.f-s {
    font-size: 44px;
    font-style: italic;
    line-height: 50px;
    margin-top: 23px;
}

.f-eq {
    font-size: 44px;
    line-height: 50px;
    margin-top: 23px;
    margin-left: 14px;
}

.f-sum {
    width: 117px;
    margin-left: 29px;
    display: flex;
    flex-direction: column;
    align-items: center;
}

.f-sigma {
    font-size: 74px;
    line-height: 84px;
}

.f-sub {
    font-size: 30px;
    line-height: 36px;
    white-space: nowrap;
    color: #444;
}

.f-frac {
    width: 102px;
    margin-left: 25px;
    display: flex;
    flex-direction: column;
    align-items: center;
}

.f-num {
    width: 100%;
    text-align: center;
    font-size: 40px;
    line-height: 44px;
    border-bottom: 2px solid #444;
}

.f-den {
    font-size: 40px;
    line-height: 44px;
    white-space: nowrap;
}

.f-den sup {
    font-size: 26px;
    line-height: 0;
}

.output-title {
    margin: 86px 0 0;
    font-size: 50px;
    font-weight: normal;
    line-height: 60px;
}

.output-text {
    margin: 47px 0 0;
    font-size: 28px;
    line-height: 40px;
}

.math {
    font-family: "Liberation Serif", serif;
    font-size: 32px;
    color: #222;
}

.math sup {
    font-size: 22px;
    line-height: 0;
}

.answer {
    display: block;
    width: 800px;
    height: 55px;
    margin-top: 112px;
    border: 2px solid #ccc;
    background: #fff;
}

.submit-row {
    display: flex;
    align-items: center;
    margin-top: 47px;
    font-size: 28px;
}

.send-btn {
    width: 178px;
    height: 56px;
    padding: 0;
    border: 2px solid #c9ab50;
    border-radius: 5px;
    background: #fbd968;
    color: #000;
    font-family: inherit;
    font-size: 26px;
}

.info-icon {
    width: 26px;
    height: 27px;
    flex: none;
    display: flex;
    align-items: center;
    justify-content: center;
    border-radius: 4px;
    background: #6fa5c9;
    color: #fff;
    font-family: "Liberation Serif", serif;
    font-size: 22px;
    font-weight: bold;
}

.submit-row .info-icon {
    margin-left: 83px;
    margin-top: -4px;
}

.attempts {
    margin-left: 12px;
}

.next-row {
    margin-top: 16px;
    padding-left: 1185px;
}

.next-btn {
    width: 197px;
    height: 57px;
    padding: 0;
    border: 2px solid #ccc;
    border-radius: 6px;
    background: #fff;
    color: #000;
    font-family: inherit;
    font-size: 26px;
}

.no-subs {
    display: flex;
    align-items: center;
    gap: 12px;
    margin-top: 76px;
    padding-left: 11px;
    font-size: 28px;
}

.no-subs .info-icon {
    margin-top: -4px;
}

.side {
    width: 440px;
    flex: none;
    margin-left: 91px;
    margin-top: 47px;
    display: flex;
    flex-direction: column;
    gap: 14px;
    font-size: 30px;
    line-height: 45px;
    color: #4a72b8;
}

.side-item {
    padding-left: 20px;
    padding-right: 50px;
    border-left: 4px solid transparent;
    width: 430px;
}

.side-item-active {
    border-left-color: #000;
    color: #000;
    line-height: 58px;
    margin-bottom: -6px;
    margin-top: -7px;
}

/* Dock */
.dock {
    height: 124px;
    flex: none;
    margin: 4px 81px 0;
    display: flex;
    align-items: flex-start;
    padding: 10px 0 0 6px;
    background: #1a1f30;
    border-top: 2px solid #33384a;
    border-radius: 12px 12px 0 0;
}

.di {
    width: 100px;
    height: 90px;
    flex: none;
    position: relative;
    display: flex;
    justify-content: center;
}

.di svg {
    width: 90px;
    height: 90px;
    overflow: visible;
}

.dot::after {
    content: "";
    position: absolute;
    left: 47px;
    top: 100px;
    width: 6px;
    height: 8px;
    border-radius: 50%;
    background: #8a90a8;
}

.dock-sep {
    width: 45px;
    height: 92px;
    flex: none;
    background: linear-gradient(#6a6e7c, #6a6e7c) center / 1px 92px no-repeat;
}

.d-skype {
    fill: #fff;
    font-size: 66px;
    font-weight: bold;
    text-anchor: middle;
}

.d-ij {
    fill: #fff;
    font-size: 34px;
    font-weight: bold;
    text-anchor: middle;
}

.d-term {
    fill: #eee;
    font-family: "Liberation Mono", monospace;
    font-size: 24px;
}

.d-slack {
    fill: #111;
    font-size: 48px;
    font-weight: bold;
    text-anchor: middle;
}

.d-ux {
    fill: #eee;
    font-size: 22px;
    text-anchor: middle;
}
```
